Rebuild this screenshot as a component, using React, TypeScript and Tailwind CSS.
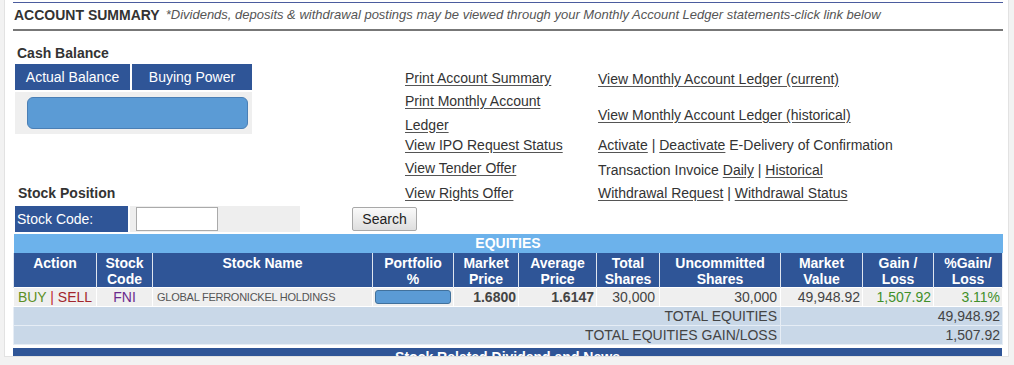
import { ReactNode } from 'react';

function A({ children }: { children: ReactNode }) {
    return <a className="text-[#333] underline underline-offset-2 decoration-[#555]">{children}</a>;
}

const cols = [83, 56, 220, 81, 65, 78, 63, 121, 82, 71, 69];

const heads = [
    ['Action'],
    ['Stock', 'Code'],
    ['Stock Name'],
    ['Portfolio', '%'],
    ['Market', 'Price'],
    ['Average', 'Price'],
    ['Total', 'Shares'],
    ['Uncommitted', 'Shares'],
    ['Market', 'Value'],
    ['Gain /', 'Loss'],
    ['%Gain/', 'Loss'],
];

export default function App() {
    return (
        <div className="h-[365px] w-[1014px] overflow-hidden bg-[#f2f2f2] font-['Liberation_Sans',Arial,sans-serif] text-[14px] text-[#333]">
            <div className="ml-[4px] h-[357px] w-[1005px] overflow-hidden border-x border-b border-[#e2e2e2] bg-white pl-[8px] pr-[5px] pt-[2px]">
                {/* title */}
                <div className="border-t border-[#4b5c9e]">
                    <div className="flex h-[28px] items-center gap-[6px] border-b-2 border-[#777] pb-[2px] pl-[1px]">
                        <span className="font-bold text-[#333]">ACCOUNT SUMMARY</span>
                        <span className="text-[13px] italic text-[#555]">
                            *Dividends, deposits &amp; withdrawal postings may be viewed through your Monthly
                            Account Ledger statements-click link below
                        </span>
                    </div>
                </div>

                <div className="flex h-[175px]">
                    {/* cash balance / stock position */}
                    <div className="flex w-[392px] flex-col pl-[2px]">
                        <div className="mt-[13px] pl-[2px] font-bold leading-[18px]">Cash Balance</div>
                        <div className="mt-[2px] grid w-[237px] grid-cols-[115px_120px] gap-[2px]">
                            <div className="flex h-[26px] items-center justify-center bg-[#2f5597] text-white">
                                Actual Balance
                            </div>
                            <div className="flex h-[26px] items-center justify-center bg-[#2f5597] text-white">
                                Buying Power
                            </div>
                            <div className="col-span-2 flex h-[42px] items-center bg-[#efefef] pl-[12px]">
                                <div className="h-[32px] w-[221px] rounded-[6px] border border-[#4a7fb5] bg-[#5b9bd5]" />
                            </div>
                        </div>
                        <div className="mt-[50px] pl-[3px] font-bold leading-[18px]">Stock Position</div>
                    </div>

                    {/* links */}
                    <div className="mt-[35px] grid grid-cols-[193px_auto] grid-rows-[24px_45px_20px_26px_24px]">
                        <div className="flex items-center">
                            <A>Print Account Summary</A>
                        </div>
                        <div className="flex items-center pt-[2px]">
                            <A>View Monthly Account Ledger (current)</A>
                        </div>
                        <div className="flex items-center leading-[24px]">
                            <A>
                                Print Monthly Account
                                <br />
                                Ledger
                            </A>
                        </div>
                        <div className="flex items-center pt-[6px]">
                            <A>View Monthly Account Ledger (historical)</A>
                        </div>
                        <div className="flex items-center">
                            <A>View IPO Request Status</A>
                        </div>
                        <div className="flex items-center">
                            <span>
                                <A>Activate</A> | <A>Deactivate</A> E-Delivery of Confirmation
                            </span>
                        </div>
                        <div className="flex items-center">
                            <A>View Tender Offer</A>
                        </div>
                        <div className="flex items-center pt-[5px]">
                            <span>
                                Transaction Invoice <A>Daily</A> | <A>Historical</A>
                            </span>
                        </div>
                        <div className="flex items-center">
                            <A>View Rights Offer</A>
                        </div>
                        <div className="flex items-center">
                            <span>
                                <A>Withdrawal Request</A> | <A>Withdrawal Status</A>
                            </span>
                        </div>
                    </div>
                </div>

                {/* stock code search */}
                <div className="flex h-[26px] items-center pl-[2px]">
                    <div className="flex h-full w-[113px] items-center bg-[#2f5597] pl-[2px] text-white">
                        Stock Code:
                    </div>
                    <div className="ml-[2px] flex h-full w-[170px] items-center bg-[#eeeeee] pl-[6px]">
                        <input
                            type="text"
                            className="h-[24px] w-[82px] border border-[#aaa] bg-white"
                        />
                    </div>
                    <button
                        type="button"
                        className="ml-[52px] h-[24px] w-[65px] rounded-[2px] border border-[#a8a8a8] bg-gradient-to-b from-[#fafafa] to-[#dedede] text-[14px] text-[#222]"
                    >
                        Search
                    </button>
                </div>

                {/* equities */}
                <table className="mt-[2px] w-[989px] table-fixed border-collapse">
                    <colgroup>
                        {cols.map((w, i) => (
                            <col key={i} style={{ width: w }} />
                        ))}
                    </colgroup>
                    <thead>
                        <tr>
                            <th colSpan={11} className="h-[19px] bg-[#6cb2eb] p-0 text-center leading-[19px] text-white">
                                EQUITIES
                            </th>
                        </tr>
                        <tr className="h-[34px] bg-[#2f5597] text-white">
                            {heads.map((h) => (
                                <th
                                    key={h.join(' ')}
                                    className="border-x border-[#dfe5ef] px-[2px] pt-[2px] align-top font-bold leading-[16px]"
                                >
                                    {h[0]}
                                    {h[1] && (
                                        <>
                                            <br />
                                            {h[1]}
                                        </>
                                    )}
                                </th>
                            ))}
                        </tr>
                    </thead>
                    <tbody className="text-[#444]">
                        <tr className="h-[19px] bg-[#efefef] leading-[18px]">
                            <td className="border border-white text-center">
                                <span className="text-[#5c8f25]">BUY</span>{' '}
                                <span className="text-[#c0282d]">|</span>{' '}
                                <span className="text-[#a3262c]">SELL</span>
                            </td>
                            <td className="border border-white text-center text-[#6b2a8c]">FNI</td>
                            <td className="border border-white pl-[4px] text-[11px] tracking-[-0.25px] text-[#555]">
                                GLOBAL FERRONICKEL HOLDINGS
                            </td>
                            <td className="border border-white px-[2px]">
                                <div className="h-[14px] w-[76px] rounded-[3px] border border-[#41719c] bg-[#5b9bd5]" />
                            </td>
                            <td className="border border-white pr-[2px] text-right font-bold">1.6800</td>
                            <td className="border border-white pr-[2px] text-right font-bold">1.6147</td>
                            <td className="border border-white pr-[4px] text-right">30,000</td>
                            <td className="border border-white pr-[3px] text-right">30,000</td>
                            <td className="border border-white pr-[2px] text-right">49,948.92</td>
                            <td className="border border-white pr-[2px] text-right text-[#3f8f2a]">1,507.92</td>
                            <td className="border border-white pr-[2px] text-right text-[#3f8f2a]">3.11%</td>
                        </tr>
                        <tr className="h-[19px] bg-[#c9d8e8] leading-[18px]">
                            <td colSpan={8} className="border border-[#e6edf5] pr-[3px] text-right">
                                TOTAL EQUITIES
                            </td>
                            <td colSpan={3} className="border border-[#e6edf5] pr-[2px] text-right">
                                49,948.92
                            </td>
                        </tr>
                        <tr className="h-[19px] bg-[#c9d8e8] leading-[18px]">
                            <td colSpan={8} className="border border-[#e6edf5] pr-[3px] text-right">
                                TOTAL EQUITIES GAIN/LOSS
                            </td>
                            <td colSpan={3} className="border border-[#e6edf5] pr-[2px] text-right">
                                1,507.92
                            </td>
                        </tr>
                    </tbody>
                </table>

                <div className="mt-[3px] h-[30px] w-[989px] bg-[#2f5597] text-center font-bold leading-[18px] text-white">
                    Stock Related Dividend and News
                </div>
            </div>
        </div>
    );
}
